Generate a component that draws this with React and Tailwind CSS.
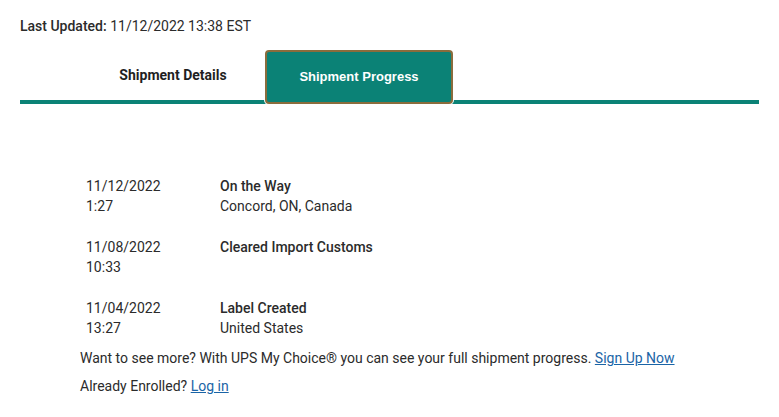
import React from 'react';

const events = [
  { date: '11/12/2022', time: '1:27', title: 'On the Way', place: 'Concord, ON, Canada' },
  { date: '11/08/2022', time: '10:33', title: 'Cleared Import Customs', place: '' },
  { date: '11/04/2022', time: '13:27', title: 'Label Created', place: 'United States' },
];

export default function App() {
  return (
    <div className="w-[779px] h-[417px] bg-white text-[14px] text-[#2b2b2b] font-['Roboto',sans-serif] overflow-hidden">
      {/* Header */}
      <div className="pl-5 pt-[17px] leading-[18px]">
        <span className="font-medium">Last Updated:</span> 11/12/2022 13:38 EST
      </div>

      {/* Tabs */}
      <div className="mx-5 mt-[15px] flex items-end border-b-4 border-[#0b8276]">
        <div className="w-[245px] h-[50px] flex items-center justify-center pl-[61px] font-bold text-[#1f1f1f]">
          Shipment Details
        </div>
        <div className="w-[188px] h-[54px] -mb-1 flex items-center justify-center rounded-[4px] border-2 border-[#8a6c3c] bg-[#0b8276] text-white text-[13px] font-bold font-['Liberation_Sans',sans-serif] shadow-[0_0_0_1px_#ffffff]">
          Shipment Progress
        </div>
      </div>

      {/* Events */}
      <div className="mt-[72px] pl-[86px] flex flex-col gap-[21px] leading-[20px]">
        {events.map((e) => (
          <div key={e.date} className="flex">
            <div className="w-[134px]">
              <div>{e.date}</div>
              <div>{e.time}</div>
            </div>
            <div>
              <div className="font-medium">{e.title}</div>
              <div>{e.place}</div>
            </div>
          </div>
        ))}
      </div>

      {/* Footer */}
      <div className="pl-20 mt-[10px] leading-[20px]">
        <div>
          Want to see more? With UPS My Choice® you can see your full shipment progress.{' '}
          <a href="#" className="text-[#1a64a6] underline">Sign Up Now</a>
        </div>
        <div className="mt-2">
          Already Enrolled? <a href="#" className="text-[#1a64a6] underline">Log in</a>
        </div>
      </div>
    </div>
  );
}
